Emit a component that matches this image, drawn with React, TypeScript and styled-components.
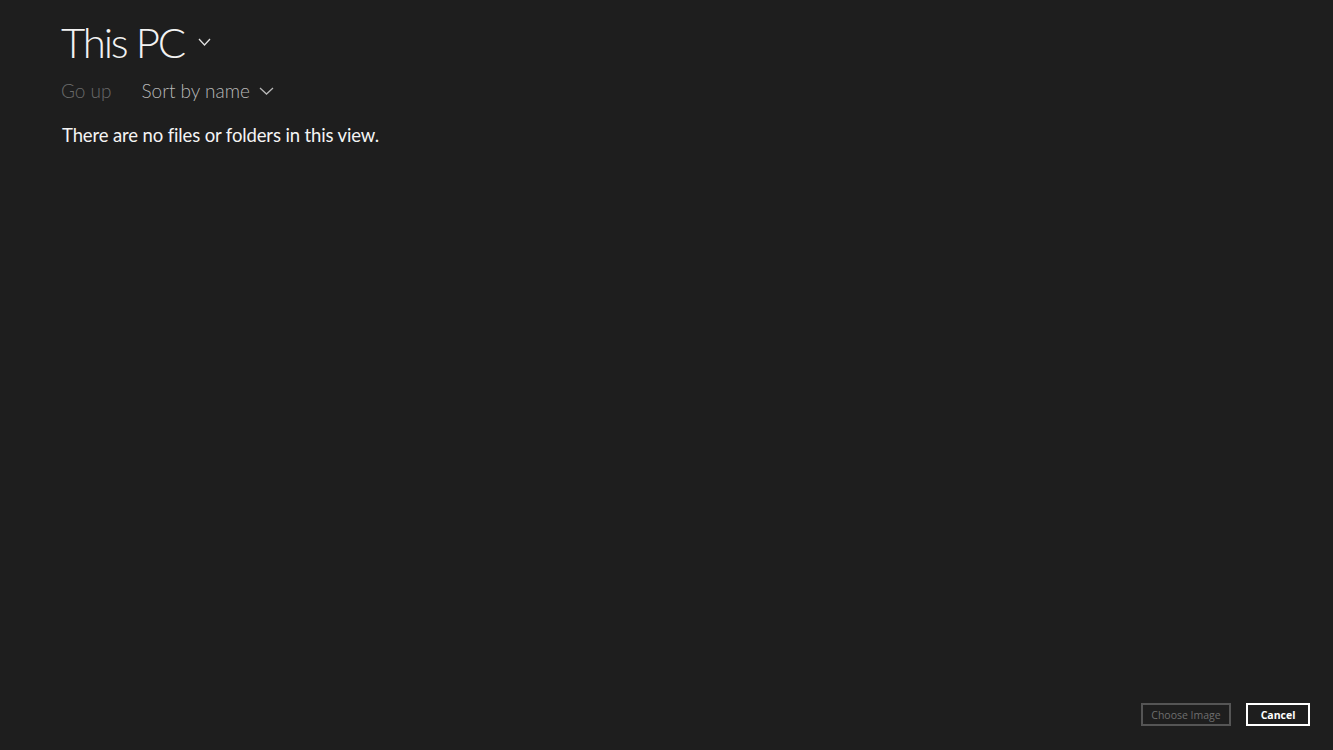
import styled, { createGlobalStyle } from "styled-components";

const Global = createGlobalStyle`
  html, body {
    margin: 0;
    padding: 0;
    background: #1e1e1e;
  }
  body {
    font-family: "Lato", "Open Sans", sans-serif;
  }
`;

const Page = styled.div`
  width: 1333px;
  height: 750px;
  box-sizing: border-box;
  display: flex;
  flex-direction: column;
  padding: 13px 23px 24px 61px;
  background: #1e1e1e;
  color: #ffffff;
`;

const TitleRow = styled.div`
  display: flex;
  align-items: center;
  gap: 14px;
`;

const Title = styled.h1`
  margin: 0;
  font-size: 42px;
  line-height: 58px;
  font-weight: 300;
  letter-spacing: -2.2px;
  color: #f2f2f2;
`;

const Toolbar = styled.div`
  display: flex;
  align-items: center;
  gap: 30px;
  margin-top: 6px;
`;

const ToolButton = styled.span<{ $disabled?: boolean }>`
  display: flex;
  align-items: center;
  gap: 9px;
  font-size: 19px;
  line-height: 28px;
  font-weight: 300;
  color: ${(p) => (p.$disabled ? "#6a6a6a" : "#b8b8b8")};
`;

const Message = styled.p`
  margin: 17px 0 0 1px;
  font-size: 18.5px;
  line-height: 26px;
  font-weight: 400;
  letter-spacing: -0.13px;
  color: #f4f4f4;
`;

const Spacer = styled.div`
  flex: 1;
`;

const Actions = styled.div`
  display: flex;
  justify-content: flex-end;
  gap: 15px;
`;

const ActionButton = styled.button<{ $primary?: boolean }>`
  width: ${(p) => (p.$primary ? "64px" : "90px")};
  height: 23px;
  box-sizing: border-box;
  padding: 0;
  background: transparent;
  border: ${(p) => (p.$primary ? "2px solid #ffffff" : "2px solid #555555")};
  color: ${(p) => (p.$primary ? "#ffffff" : "#6e6e6e")};
  font-family: "Open Sans", sans-serif;
  font-size: 10.5px;
  font-weight: ${(p) => (p.$primary ? 700 : 400)};
`;

const Chevron = ({ color, width }: { color: string; width: number }) => (
  <svg width={width} height="8" viewBox={`0 0 ${width} 8`} fill="none">
    <path
      d={`M1 1 L${width / 2} 7 L${width - 1} 1`}
      stroke={color}
      strokeWidth="1.3"
    />
  </svg>
);

export default function App() {
  return (
    <>
      <Global />
      <Page>
        <TitleRow>
          <Title>This PC</Title>
          <Chevron color="#e0e0e0" width={13} />
        </TitleRow>
        <Toolbar>
          <ToolButton $disabled>Go up</ToolButton>
          <ToolButton>
            Sort by name
            <Chevron color="#b8b8b8" width={15} />
          </ToolButton>
        </Toolbar>
        <Message>There are no files or folders in this view.</Message>
        <Spacer />
        <Actions>
          <ActionButton>Choose Image</ActionButton>
          <ActionButton $primary>Cancel</ActionButton>
        </Actions>
      </Page>
    </>
  );
}
